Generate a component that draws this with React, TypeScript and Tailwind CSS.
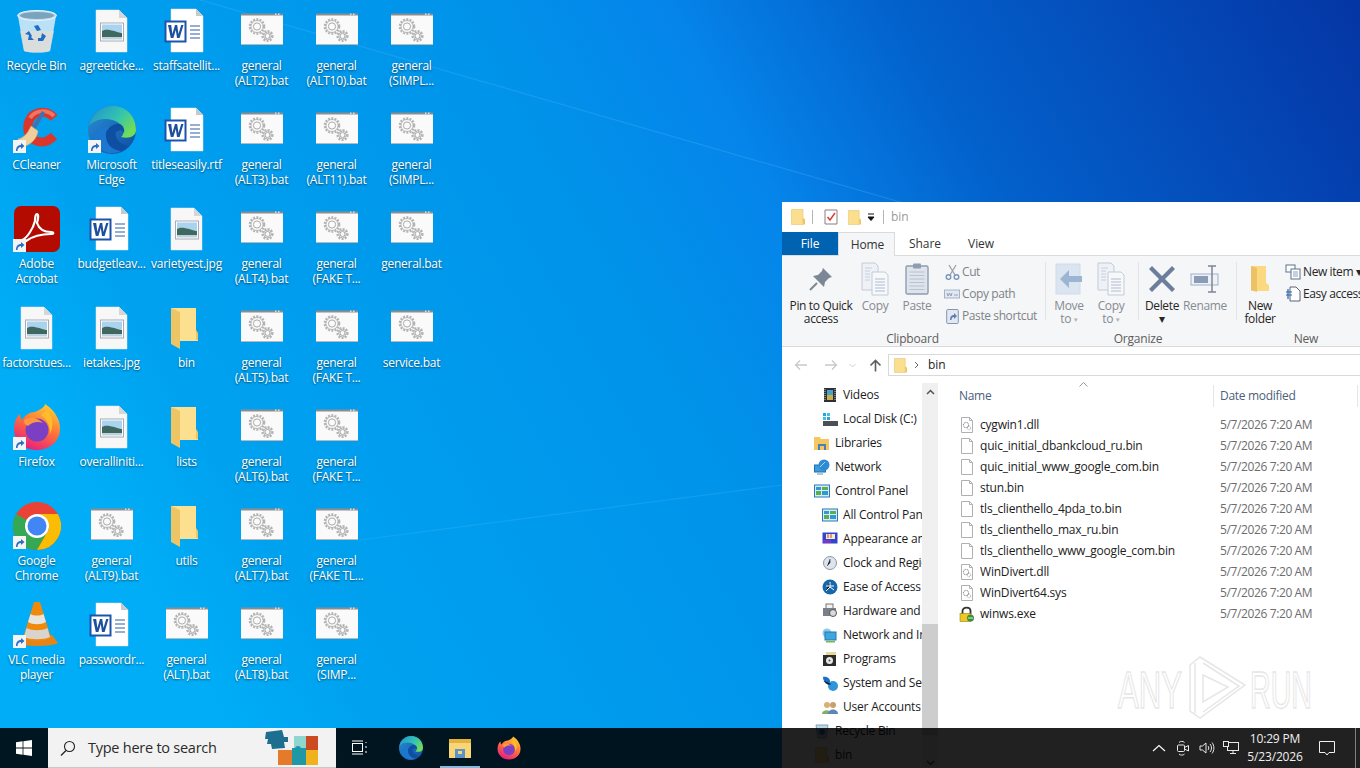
const FONT = "[font-family:'Open_Sans','Noto_Sans',sans-serif]";

function Shortcut() {
  return (
    <span className="absolute bottom-[1px] left-0 flex h-[13px] w-[13px] items-center justify-center bg-[#f4f4f4]">
      <svg width="11" height="11" viewBox="0 0 11 11">
        <path d="M2 10C2 6 4 4 7 4V2l3.5 3L7 8V6C5 6 3.5 7.5 3.5 10Z" fill="#2a6fc4" />
      </svg>
    </span>
  );
}

function Gear({ cx, cy, r }: { cx: number; cy: number; r: number }) {
  return (
    <g fill="none">
      <circle cx={cx} cy={cy} r={r} stroke="#b4b4b4" strokeWidth="2.2" strokeDasharray="2 1.3" />
      <circle cx={cx} cy={cy} r={r - 1.2} stroke="#a2a2a2" strokeWidth="0.7" />
      <circle cx={cx} cy={cy} r={r * 0.5} stroke="#a2a2a2" strokeWidth="0.9" />
    </g>
  );
}

function BatIcon() {
  return (
    <svg width="48" height="48" viewBox="0 0 48 48">
      <rect x="3" y="7" width="42" height="31" fill="#fafafa" />
      <rect x="3" y="6.5" width="42" height="2" fill="#8d8d8d" />
      <rect x="3" y="37" width="42" height="1" fill="#b9b9b9" />
      <rect x="37" y="6.5" width="1.5" height="1.5" fill="#ddd" />
      <rect x="40" y="6.5" width="1.5" height="1.5" fill="#ddd" />
      <Gear cx={19} cy={19.5} r={7.2} />
      <Gear cx={29.5} cy={29} r={5} />
    </svg>
  );
}

function PageShape() {
  return (
    <>
      <path d="M8 3H31L39 11V45H8Z" fill="#f7f7f7" stroke="#e4e4e4" strokeWidth="0.5" />
      <path d="M31 3L39 11H31Z" fill="#d6d6d6" />
    </>
  );
}

function ImageIcon() {
  return (
    <svg width="48" height="48" viewBox="0 0 48 48">
      <PageShape />
      <rect x="12.5" y="16" width="23" height="18" fill="#fff" stroke="#a9a9b8" />
      <rect x="14" y="17.5" width="20" height="8" fill="#a9d3ee" />
      <path d="M14 24C19 21 24 24 34 26V30H14Z" fill="#3f6860" />
      <rect x="14" y="30" width="20" height="2.5" fill="#bcd3de" />
    </svg>
  );
}

function WordIcon() {
  return (
    <svg width="48" height="48" viewBox="0 0 48 48">
      <path d="M8 2H33L40 9V45H8Z" fill="#fff" stroke="#e2e2e2" strokeWidth="0.5" />
      <path d="M33 2L40 9H33Z" fill="#c9c9c9" />
      <path d="M27 19H37M27 23H37M27 27H37M27 31H37" stroke="#2f5ea8" strokeWidth="1" />
      <rect x="2.5" y="14.5" width="20" height="20" fill="#fff" stroke="#1c54ab" strokeWidth="2" />
      <path d="M5 18H8.2L9.4 27L12 18H14.2L15.5 27L18.2 18H20.5L16.6 31H14L12.8 23L10.4 31H7.8Z" fill="#1d4f9f" />
    </svg>
  );
}

function FolderIcon() {
  return (
    <svg width="48" height="48" viewBox="0 0 48 48">
      <path d="M8 4H33V34H35V31H35V36H8Z" fill="#fbdc8a" />
      <path d="M14 4H33V29L35 31V37H14Z" fill="#fde08f" />
      <path d="M8 4L17 8V45L8 40Z" fill="#eec565" />
      <path d="M33 26L35 29V36H33Z" fill="#f0c560" />
    </svg>
  );
}

function RecycleIcon() {
  return (
    <svg width="48" height="48" viewBox="0 0 48 48">
      <path d="M5 9L11 44C17 46 31 46 37 44L43 9Z" fill="#cfe8f6" opacity="0.9" />
      <path d="M7 24L11 44C17 46 31 46 37 44L41 24Z" fill="#e6ddd2" opacity="0.7" />
      <ellipse cx="24" cy="8.5" rx="19.5" ry="5" fill="#bfd8e8" stroke="#eaf5fb" />
      <ellipse cx="24" cy="8.5" rx="17" ry="3.5" fill="#7aa3bd" />
      <path d="M21 19L25 18L28 23L24 24ZM29 26L33 29L30 34H25V31H28ZM21 33H15L16 28L12 27L16 24L19 29L18 30Z" fill="#1f6dc6" />
    </svg>
  );
}

function CCleanerIcon() {
  return (
    <svg width="48" height="48" viewBox="0 0 48 48">
      <path d="M41 12C34 3 20 5 16 15C12 25 18 36 29 36C34 36 38 33 41 30" fill="none" stroke="#d9372c" strokeWidth="9" />
      <path d="M41 10C34 3 22 4 17 12" fill="none" stroke="#ef7462" strokeWidth="4" />
      <path d="M29 5L32 7L22 24L18 22Z" fill="#3b74b5" />
      <path d="M18 20L25 25C24 33 17 40 8 41C5 37 6 36 5 33C11 32 15 27 18 20Z" fill="#f0cf9c" stroke="#d8a96c" strokeWidth="0.6" />
    </svg>
  );
}

function EdgeIcon({ size = 48 }: { size?: number }) {
  return (
    <svg width={size} height={size} viewBox="0 0 48 48">
      <defs>
        <linearGradient id="edgeA" x1="0" y1="0" x2="1" y2="0.6">
          <stop offset="0" stopColor="#1f8fcf" />
          <stop offset="0.6" stopColor="#33c3b0" />
          <stop offset="1" stopColor="#6fdc5a" />
        </linearGradient>
        <linearGradient id="edgeB" x1="0" y1="0" x2="1" y2="1">
          <stop offset="0" stopColor="#2a8fd8" />
          <stop offset="1" stopColor="#0d4d9e" />
        </linearGradient>
      </defs>
      <circle cx="24" cy="24" r="24" fill="url(#edgeB)" />
      <path d="M1 20C4 6 15 0 25 0C38 0 48 10 48 24C48 31 40 33 33 31C37 28 36 21 32 18C24 11 8 11 1 20Z" fill="url(#edgeA)" />
      <path d="M19 36C15 28 20 20 28 18C34 17 37 22 36 27C34 23 31 24 28 26C26 31 31 38 40 40C34 47 25 48 19 36Z" fill="#0e4fa3" />
      <path d="M18 30C18 38 24 44 33 45C23 50 10 46 5 34C8 24 16 20 22 20C18 24 17 27 18 30Z" fill="#1b77cf" />
    </svg>
  );
}

function AcrobatIcon() {
  return (
    <svg width="48" height="48" viewBox="0 0 48 48">
      <rect x="1" y="1" width="46" height="46" rx="7" fill="#b30b00" />
      <path
        d="M9 35C14 33 20 24 22 16C22 11 23 9 24 9C26 9 25 15 24 18C26 24 31 27 38 27C41 27 41 29 38 29C30 29 20 31 13 36C9 39 7 37 9 35Z"
        fill="none"
        stroke="#fff"
        strokeWidth="2.2"
      />
    </svg>
  );
}

function FirefoxIcon({ size = 48 }: { size?: number }) {
  return (
    <svg width={size} height={size} viewBox="0 0 48 48">
      <defs>
        <linearGradient id="ffA" x1="0.7" y1="0" x2="0.2" y2="1">
          <stop offset="0" stopColor="#ffcb2e" />
          <stop offset="0.45" stopColor="#ff7139" />
          <stop offset="1" stopColor="#e31587" />
        </linearGradient>
      </defs>
      <path d="M24 47C10 47 1 37 1 26C1 19 4 13 7 11C7 14 8 16 9 17C12 12 17 9 22 9C28 6 32 4 32 1C38 5 42 9 44 14C47 19 47 24 47 26C47 38 37 47 24 47Z" fill="url(#ffA)" />
      <circle cx="24" cy="27" r="11.5" fill="#7b3fc4" />
      <path d="M11 17C17 13 25 15 30 20C25 18 19 19 15 23C12 22 11 20 11 17Z" fill="#ff9640" />
      <path d="M34 8C40 14 41 22 37 31C37 22 34 16 28 12Z" fill="#ffbd2e" />
    </svg>
  );
}

function ChromeIcon() {
  return (
    <svg width="48" height="48" viewBox="0 0 48 48">
      <circle cx="24" cy="24" r="24" fill="#ea4335" />
      <path d="M24 24L3.2 12A24 24 0 0 0 24 48L36 27Z" fill="#34a853" />
      <path d="M24 12H44.8A24 24 0 0 1 24 48L36 27Z" fill="#fbbc04" />
      <circle cx="24" cy="24" r="12" fill="#fff" />
      <circle cx="24" cy="24" r="9.5" fill="#4285f4" />
    </svg>
  );
}

function VlcIcon() {
  return (
    <svg width="48" height="48" viewBox="0 0 48 48">
      <path d="M4 42L9 34H39L45 42C40 46 9 46 4 42Z" fill="#e78415" />
      <path d="M21 1H27L38 37C32 41 16 41 10 37Z" fill="#f08a0c" />
      <path d="M17.5 13C21 15 27 15 30.5 13L33 21C28 24 20 24 15 21Z" fill="#e8e4de" />
      <path d="M13.5 27C19 30 29 30 34.5 27L37 36C31 39 17 39 11 36Z" fill="#d9d4ce" />
    </svg>
  );
}

type Kind = "bat" | "image" | "word" | "folder" | "recycle" | "ccleaner" | "edge" | "acrobat" | "firefox" | "chrome" | "vlc";

function DesktopGlyph({ kind }: { kind: Kind }) {
  switch (kind) {
    case "bat":
      return <BatIcon />;
    case "image":
      return <ImageIcon />;
    case "word":
      return <WordIcon />;
    case "folder":
      return <FolderIcon />;
    case "recycle":
      return <RecycleIcon />;
    case "ccleaner":
      return <CCleanerIcon />;
    case "edge":
      return <EdgeIcon />;
    case "acrobat":
      return <AcrobatIcon />;
    case "firefox":
      return <FirefoxIcon />;
    case "chrome":
      return <ChromeIcon />;
    case "vlc":
      return <VlcIcon />;
  }
}

const DESKTOP: Array<{ label: string; kind: Kind; link?: boolean }> = [
  { label: "Recycle Bin", kind: "recycle" },
  { label: "CCleaner", kind: "ccleaner", link: true },
  { label: "Adobe\nAcrobat", kind: "acrobat", link: true },
  { label: "factorstues...", kind: "image" },
  { label: "Firefox", kind: "firefox", link: true },
  { label: "Google\nChrome", kind: "chrome", link: true },
  { label: "VLC media\nplayer", kind: "vlc", link: true },

  { label: "agreeticke...", kind: "image" },
  { label: "Microsoft\nEdge", kind: "edge", link: true },
  { label: "budgetleav...", kind: "word" },
  { label: "ietakes.jpg", kind: "image" },
  { label: "overalliniti...", kind: "image" },
  { label: "general\n(ALT9).bat", kind: "bat" },
  { label: "passwordr...", kind: "word" },

  { label: "staffsatellit...", kind: "word" },
  { label: "titleseasily.rtf", kind: "word" },
  { label: "varietyest.jpg", kind: "image" },
  { label: "bin", kind: "folder" },
  { label: "lists", kind: "folder" },
  { label: "utils", kind: "folder" },
  { label: "general\n(ALT).bat", kind: "bat" },

  { label: "general\n(ALT2).bat", kind: "bat" },
  { label: "general\n(ALT3).bat", kind: "bat" },
  { label: "general\n(ALT4).bat", kind: "bat" },
  { label: "general\n(ALT5).bat", kind: "bat" },
  { label: "general\n(ALT6).bat", kind: "bat" },
  { label: "general\n(ALT7).bat", kind: "bat" },
  { label: "general\n(ALT8).bat", kind: "bat" },

  { label: "general\n(ALT10).bat", kind: "bat" },
  { label: "general\n(ALT11).bat", kind: "bat" },
  { label: "general\n(FAKE T...", kind: "bat" },
  { label: "general\n(FAKE T...", kind: "bat" },
  { label: "general\n(FAKE T...", kind: "bat" },
  { label: "general\n(FAKE TL...", kind: "bat" },
  { label: "general\n(SIMP...", kind: "bat" },

  { label: "general\n(SIMPL...", kind: "bat" },
  { label: "general\n(SIMPL...", kind: "bat" },
  { label: "general.bat", kind: "bat" },
  { label: "service.bat", kind: "bat" },
];

function DesktopItem({ label, kind, link }: { label: string; kind: Kind; link?: boolean }) {
  return (
    <div className="flex w-[75px] flex-col items-center pt-[7px]">
      <div className="relative h-12 w-12">
        <DesktopGlyph kind={kind} />
        {link ? <Shortcut /> : null}
      </div>
      <p className="mt-[3px] w-[75px] whitespace-pre-line text-center text-[12px] leading-[15px] tracking-[-0.25px] text-white [text-shadow:0_1px_2px_rgba(0,0,0,0.55)]">
        {label}
      </p>
    </div>
  );
}

function Wallpaper() {
  return (
    <svg className="absolute inset-0" width="1360" height="768" viewBox="0 0 1360 768">
      <path d="M200 0L900 202" stroke="#4fb4ff" strokeWidth="1.2" opacity="0.3" />
      <path d="M360 540L782 485" stroke="#5cc8ff" strokeWidth="1.2" opacity="0.2" />
    </svg>
  );
}

/* ---------- explorer window ---------- */

function SmallFolder({ size = 16 }: { size?: number }) {
  return (
    <svg width={size} height={size} viewBox="0 0 16 16">
      <path d="M1.5 0.5H13V15.5H1.5Z" fill="#fcdf8e" stroke="#e3c374" strokeWidth="0.6" />
      <path d="M13 9L15 10V15.5H13Z" fill="#eec565" />
    </svg>
  );
}

function TitleBar() {
  return (
    <div className="flex h-[30px] items-center bg-white pl-[8px]">
      <SmallFolder />
      <span className="ml-[6px] h-[14px] w-px bg-[#b5b5b5]" />
      <svg className="ml-[11px]" width="14" height="16" viewBox="0 0 14 16">
        <path d="M1 1H13V15H1Z" fill="#fff" stroke="#8c7f7f" />
        <path d="M3.5 8L6 11L11 4" fill="none" stroke="#d83b30" strokeWidth="1.4" />
      </svg>
      <span className="ml-[9px]">
        <SmallFolder size={15} />
      </span>
      <svg className="ml-[4px]" width="10" height="10" viewBox="0 0 10 10">
        <path d="M2 2H8M2 5H8L5 8.5Z" stroke="#111" strokeWidth="1" fill="#111" />
      </svg>
      <span className="ml-[7px] h-[14px] w-px bg-[#b5b5b5]" />
      <span className="ml-[7px] text-[12px] text-[#9b9b9b]">bin</span>
    </div>
  );
}

function Tabs() {
  return (
    <div className="flex h-[24px] items-stretch border-b border-[#dadbdc] bg-white text-[12px] tracking-[-0.1px] text-[#333]">
      <div className="flex w-[56px] items-center justify-center bg-[#0063b1] text-white">File</div>
      <div className="-mb-px flex w-[57px] items-center justify-center border-x border-t border-x-[#dadbdc] border-t-[#dadbdc] bg-[#f5f6f7] pl-[2px]">
        Home
      </div>
      <div className="flex w-[60px] items-center justify-center">Share</div>
      <div className="flex w-[52px] items-center justify-center">View</div>
    </div>
  );
}

function BigButton({
  width,
  label,
  dim,
  caret,
  children,
}: {
  width: string;
  label: string;
  dim?: boolean;
  caret?: boolean;
  children: React.ReactNode;
}) {
  return (
    <div className={`flex shrink-0 flex-col items-center ${width}`}>
      <div className="flex h-[41px] items-center justify-center">{children}</div>
      <p className={`whitespace-pre-line text-center text-[12px] leading-[13px] tracking-[-0.35px] ${dim ? "text-[#858b92]" : "text-[#262626]"}`}>
        {label}
        {caret ? <span className="ml-[3px] align-middle text-[7px] text-[#b0b0b0]">▾</span> : null}
      </p>
    </div>
  );
}

function SmallButton({ label, dim, children }: { label: string; dim?: boolean; children: React.ReactNode }) {
  return (
    <div className="flex h-[22px] items-center gap-[2px] whitespace-nowrap">
      <span className="flex w-[16px] justify-center">{children}</span>
      <span className={`text-[12px] tracking-[-0.4px] ${dim ? "text-[#7d8389]" : "text-[#262626]"}`}>{label}</span>
    </div>
  );
}

function Sep() {
  return <span className="my-[4px] block h-[58px] w-px shrink-0 bg-[#e2e3e4]" />;
}

function CopyGlyph({ size = 30 }: { size?: number }) {
  return (
    <svg width={size} height={size + 4} viewBox="0 0 30 34">
      <path d="M2 1H15L18 4V28H2Z" fill="#eef1f5" stroke="#c3cbd8" />
      <path d="M12 10H25L28 13V33H12Z" fill="#f7f8fa" stroke="#c3cbd8" />
      <path d="M15 17H25M15 20H25M15 23H25M15 26H25M15 29H25" stroke="#aebbd1" />
      <path d="M5 6H12M5 9H10M5 12H10M5 15H10M5 18H10" stroke="#c6d0e0" />
    </svg>
  );
}

function Ribbon() {
  return (
    <div className="flex h-[91px] border-b border-[#dadbdc] bg-[#f5f6f7] pt-[2px]">
      {/* Clipboard */}
      <div className="flex w-[263px] shrink-0 flex-col">
        <div className="flex h-[76px]">
          <BigButton width="w-[78px]" label={"Pin to Quick\naccess"}>
            <svg width="24" height="24" viewBox="0 0 24 24">
              <path d="M14 1L23 10L20 11L16 15L15 20L4 9L9 8L13 4Z" fill="#7b8794" />
              <path d="M8 16L1 23" stroke="#7b8794" strokeWidth="2" />
            </svg>
          </BigButton>
          <BigButton width="w-[30px]" label="Copy" dim>
            <CopyGlyph />
          </BigButton>
          <BigButton width="w-[54px]" label="Paste" dim>
            <svg width="24" height="32" viewBox="0 0 24 32">
              <rect x="1" y="3" width="22" height="28" rx="1.5" fill="#dfe3ea" stroke="#8f9cb2" strokeWidth="1.4" />
              <rect x="8" y="0.5" width="8" height="5" rx="1" fill="#8f9cb2" />
              <path d="M4.5 9H19.5M4.5 12.5H19.5M4.5 16H19.5M4.5 19.5H19.5M4.5 23H19.5M4.5 26.5H19.5" stroke="#b7c2d4" />
            </svg>
          </BigButton>
          <div className="flex w-[100px] flex-col pt-[3px]">
            <SmallButton label="Cut" dim>
              <svg width="15" height="16" viewBox="0 0 15 16">
                <path d="M4 1L10 11M11 1L5 11" stroke="#9aa3ad" strokeWidth="1.3" />
                <circle cx="3.5" cy="13" r="2.3" fill="none" stroke="#7d95bd" strokeWidth="1.4" />
                <circle cx="11.5" cy="13" r="2.3" fill="none" stroke="#7d95bd" strokeWidth="1.4" />
              </svg>
            </SmallButton>
            <SmallButton label="Copy path" dim>
              <svg width="16" height="12" viewBox="0 0 16 12">
                <rect x="0.5" y="2" width="15" height="8" fill="#e3e8f0" stroke="#a5b3c9" />
                <path d="M3 5L4 8L5.5 5L7 8L8 5M10 7H14" stroke="#7d8fae" strokeWidth="0.8" fill="none" />
              </svg>
            </SmallButton>
            <SmallButton label="Paste shortcut" dim>
              <svg width="13" height="16" viewBox="0 0 13 16">
                <rect x="0.7" y="1.5" width="11.6" height="14" rx="1" fill="#e3e8f0" stroke="#8596b2" />
                <path d="M4 12C4 8 6 7 8 7V5L11 8L8 11V9C6.5 9 5.5 10 5.5 12Z" fill="#5d7eb3" />
              </svg>
            </SmallButton>
          </div>
        </div>
        <p className="pr-[2px] text-center text-[12px] leading-[14px] tracking-[-0.2px] text-[#5c5c5c]">Clipboard</p>
      </div>
      <Sep />
      {/* Organize */}
      <div className="flex w-[190px] shrink-0 flex-col">
        <div className="flex h-[76px]">
          <BigButton width="w-[46px]" label={"Move\nto"} dim caret>
            <svg width="28" height="32" viewBox="0 0 28 32">
              <rect x="1" y="1" width="24" height="30" fill="#dbe5f1" stroke="#cfdbe9" />
              <path d="M27 13H14V7L5 16L14 25V19H27Z" fill="#9cb5d3" />
            </svg>
          </BigButton>
          <BigButton width="w-[38px]" label={"Copy\nto"} dim caret>
            <CopyGlyph />
          </BigButton>
          <span className="ml-[8px]">
            <Sep />
          </span>
          <BigButton width="w-[46px]" label={"Delete\n▾"}>
            <svg width="26" height="26" viewBox="0 0 26 26">
              <path d="M3 0L13 10L23 0L26 3L16 13L26 23L23 26L13 16L3 26L0 23L10 13L0 3Z" fill="#6d7e9c" />
            </svg>
          </BigButton>
          <BigButton width="w-[40px]" label="Rename" dim>
            <svg width="30" height="28" viewBox="0 0 30 28">
              <rect x="1" y="9" width="27" height="11" fill="#eef2f7" stroke="#9fb0c8" />
              <rect x="4" y="11" width="14" height="7" fill="#8a9bb6" />
              <path d="M18 1H26M22 1V27M18 27H26" stroke="#7c8695" strokeWidth="1.5" />
            </svg>
          </BigButton>
        </div>
        <p className="pr-[6px] text-center text-[12px] leading-[14px] tracking-[-0.2px] text-[#5c5c5c]">Organize</p>
      </div>
      <Sep />
      {/* New */}
      <div className="flex w-[140px] shrink-0 flex-col">
        <div className="flex h-[76px]">
          <BigButton width="w-[46px]" label={"New\nfolder"}>
            <svg width="22" height="28" viewBox="0 0 22 28">
              <path d="M2 1H17V18L20 20V26H2Z" fill="#fbd980" />
              <path d="M2 1L8 3V27L2 25Z" fill="#edc266" />
            </svg>
          </BigButton>
          <div className="flex flex-col pl-[2px] pt-[3px]">
            <SmallButton label="New item ▾">
              <svg width="16" height="16" viewBox="0 0 16 16">
                <rect x="1" y="1" width="9" height="7" fill="#fff" stroke="#5b7290" />
                <rect x="6" y="5" width="9" height="10" fill="#fff" stroke="#5b7290" />
                <path d="M8 8H13M8 10H13M8 12H13" stroke="#8ea2bd" />
              </svg>
            </SmallButton>
            <SmallButton label="Easy access">
              <svg width="16" height="16" viewBox="0 0 16 16">
                <path d="M5 1H11L15 5V15H5Z" fill="#fff" stroke="#56657a" />
                <path d="M1 6H7M1 9H7M3 3V13" stroke="#2b62ad" strokeWidth="1.2" />
              </svg>
            </SmallButton>
          </div>
        </div>
        <p className="w-[138px] text-center text-[12px] leading-[14px] tracking-[-0.2px] text-[#5c5c5c]">New</p>
      </div>
    </div>
  );
}

function AddressBar() {
  return (
    <div className="flex h-[31px] items-center bg-white pb-[1px] pt-[6px]">
      <div className="flex w-[106px] shrink-0 items-center pl-[12px]">
        <svg width="14" height="12" viewBox="0 0 14 12">
          <path d="M13 6H2M6 1.5L1.5 6L6 10.5" fill="none" stroke="#c9c9c9" strokeWidth="1.3" />
        </svg>
        <svg className="ml-[16px]" width="14" height="12" viewBox="0 0 14 12">
          <path d="M1 6H12M8 1.5L12.5 6L8 10.5" fill="none" stroke="#c9c9c9" strokeWidth="1.3" />
        </svg>
        <svg className="ml-[11px]" width="7" height="5" viewBox="0 0 7 5">
          <path d="M0.5 1L3.5 4L6.5 1" fill="none" stroke="#cfcfcf" />
        </svg>
        <svg className="ml-[13px]" width="13" height="13" viewBox="0 0 13 13">
          <path d="M6.5 12.5V2M1.5 6.5L6.5 1.5L11.5 6.5" fill="none" stroke="#5d5d5d" strokeWidth="1.6" />
        </svg>
      </div>
      <div className="flex h-[22px] flex-1 items-center border border-[#d9d9d9] pl-[4px]">
        <SmallFolder size={15} />
        <svg className="ml-[6px]" width="6" height="8" viewBox="0 0 6 8">
          <path d="M1 1L4 4L1 7" fill="none" stroke="#666" />
        </svg>
        <span className="ml-[8px] text-[12px] text-[#1c1c1c]">bin</span>
      </div>
    </div>
  );
}

function NavGlyph({ kind }: { kind: string }) {
  switch (kind) {
    case "videos":
      return (
        <svg width="16" height="16" viewBox="0 0 16 16">
          <rect x="2" y="1" width="12" height="14" fill="#2d2f38" />
          <rect x="5" y="3" width="6" height="5" fill="#4aa3c6" />
          <rect x="5" y="8" width="6" height="5" fill="#c9b04a" />
          <path d="M3 2V14M13 2V14" stroke="#c9c9c9" strokeDasharray="1 1" />
        </svg>
      );
    case "disk":
      return (
        <svg width="16" height="16" viewBox="0 0 16 16">
          <rect x="1" y="10" width="15" height="5" fill="#4c4f55" />
          <rect x="1" y="2" width="3" height="3" fill="#22a6dc" />
          <rect x="5" y="2" width="3" height="3" fill="#3bc2e8" />
          <rect x="1" y="6" width="3" height="3" fill="#3bc2e8" />
          <rect x="5" y="6" width="3" height="3" fill="#22a6dc" />
        </svg>
      );
    case "libraries":
      return (
        <svg width="16" height="16" viewBox="0 0 16 16">
          <path d="M0 2H6L7 4H15V15H0Z" fill="#f5c763" />
          <rect x="4" y="9" width="8" height="6" fill="#4d7fb5" />
          <rect x="6" y="11" width="4" height="4" fill="#f5c763" />
        </svg>
      );
    case "network":
      return (
        <svg width="16" height="16" viewBox="0 0 16 16">
          <rect x="0.5" y="6" width="11" height="7" fill="#3b9ddc" stroke="#1f6fb0" />
          <circle cx="10" cy="6" r="5.5" fill="#2f8bd3" />
          <path d="M6 8L11 3" stroke="#a9d8f5" />
          <path d="M3 15H9" stroke="#6f8aa3" />
        </svg>
      );
    case "panel":
      return (
        <svg width="16" height="16" viewBox="0 0 16 16">
          <rect x="0.5" y="2" width="15" height="12" fill="#d7ebf8" stroke="#2a79bb" />
          <rect x="2" y="4" width="5" height="3" fill="#2e9ad0" />
          <rect x="8" y="4" width="6" height="3" fill="#59b04b" />
          <rect x="2" y="8" width="5" height="4" fill="#59b04b" />
          <rect x="8" y="8" width="6" height="4" fill="#2e9ad0" />
        </svg>
      );
    case "appearance":
      return (
        <svg width="16" height="16" viewBox="0 0 16 16">
          <rect x="0.5" y="1.5" width="15" height="11" fill="#3345c8" />
          <rect x="4" y="3" width="9" height="5" fill="#f5ebd0" />
          <path d="M5 4H7M8 4H10M5 6H7M8 6H10" stroke="#c24a3b" />
          <rect x="1" y="9" width="8" height="3" fill="#7d37c8" />
        </svg>
      );
    case "clock":
      return (
        <svg width="16" height="16" viewBox="0 0 16 16">
          <circle cx="8" cy="8" r="6.5" fill="#dfe4ea" stroke="#8a97a8" />
          <path d="M8 4V8L5 11" stroke="#5a6878" />
        </svg>
      );
    case "ease":
      return (
        <svg width="16" height="16" viewBox="0 0 16 16">
          <circle cx="8" cy="8" r="7.5" fill="#1767ad" />
          <path d="M8 3V8L4 12M8 8L12 11M4 7H12" stroke="#fff" />
        </svg>
      );
    case "hardware":
      return (
        <svg width="16" height="16" viewBox="0 0 16 16">
          <rect x="4" y="1" width="7" height="5" fill="#f1f1f1" stroke="#777" />
          <rect x="1" y="5" width="13" height="8" fill="#7b7f87" />
          <circle cx="11" cy="10" r="3.5" fill="#d9d9d9" stroke="#555" />
        </svg>
      );
    case "netint":
      return (
        <svg width="16" height="16" viewBox="0 0 16 16">
          <circle cx="5" cy="6" r="4.5" fill="#8cc9ea" />
          <rect x="3" y="5" width="11" height="8" fill="#3fa5dc" stroke="#2179b0" />
          <rect x="4" y="14" width="9" height="1.5" fill="#76b84e" />
        </svg>
      );
    case "programs":
      return (
        <svg width="16" height="16" viewBox="0 0 16 16">
          <rect x="4" y="1" width="10" height="4" fill="#e9d89b" />
          <rect x="1" y="4" width="13" height="11" fill="#2c2c2c" />
          <circle cx="7.5" cy="9.5" r="3.5" fill="#e8e8e8" />
          <circle cx="7.5" cy="9.5" r="1" fill="#555" />
        </svg>
      );
    case "system":
      return (
        <svg width="16" height="16" viewBox="0 0 16 16">
          <path d="M1 2C5 1 9 4 8 8C5 9 1 7 1 2Z" fill="#1b6fc2" />
          <circle cx="11" cy="11" r="5" fill="#2f95d8" />
          <path d="M2 6C4 9 7 10 9 9" stroke="#114f8f" />
        </svg>
      );
    case "users":
      return (
        <svg width="16" height="16" viewBox="0 0 16 16">
          <circle cx="5" cy="6" r="3" fill="#d8b073" />
          <path d="M0 15C0 10 9 10 9 15Z" fill="#7fb25f" />
          <circle cx="11" cy="6" r="3" fill="#caa06a" />
          <path d="M6 15C6 9 16 9 16 15Z" fill="#5b86b8" />
        </svg>
      );
    case "bin":
      return (
        <svg width="16" height="16" viewBox="0 0 16 16">
          <path d="M2 2H14L12 15H4Z" fill="#bcd7e8" stroke="#7ea2bc" />
          <circle cx="8" cy="9" r="3" fill="#2f78c4" />
        </svg>
      );
    default:
      return <SmallFolder />;
  }
}

const NAV = [
  { label: "Videos", icon: "videos", sub: true },
  { label: "Local Disk (C:)", icon: "disk", sub: true },
  { label: "Libraries", icon: "libraries" },
  { label: "Network", icon: "network" },
  { label: "Control Panel", icon: "panel" },
  { label: "All Control Panel Items", icon: "panel", sub: true },
  { label: "Appearance and Personalization", icon: "appearance", sub: true },
  { label: "Clock and Region", icon: "clock", sub: true },
  { label: "Ease of Access", icon: "ease", sub: true },
  { label: "Hardware and Sound", icon: "hardware", sub: true },
  { label: "Network and Internet", icon: "netint", sub: true },
  { label: "Programs", icon: "programs", sub: true },
  { label: "System and Security", icon: "system", sub: true },
  { label: "User Accounts", icon: "users", sub: true },
  { label: "Recycle Bin", icon: "bin" },
  { label: "bin", icon: "folder" },
];

function NavPane() {
  return (
    <div className="flex w-[156px] shrink-0">
      <div className="w-[140px] shrink-0 overflow-hidden pt-[5px]">
        {NAV.map((n) => (
          <div key={n.label} className={`flex h-[24px] items-center whitespace-nowrap ${n.sub ? "pl-[40px]" : "pl-[32px]"}`}>
            <span className="flex w-[16px] shrink-0 justify-center">
              <NavGlyph kind={n.icon} />
            </span>
            <span className="ml-[5px] text-[12px] tracking-[-0.2px] text-[#1c1c1c]">{n.label}</span>
          </div>
        ))}
      </div>
      <div className="mt-[5px] flex w-[16px] shrink-0 flex-col items-center bg-[#f0f0f0] pt-[5px]">
        <svg width="9" height="6" viewBox="0 0 9 6" className="mt-[1px]">
          <path d="M1 5L4.5 1.5L8 5" fill="none" stroke="#555" strokeWidth="1.5" />
        </svg>
        <span className="mt-[229px] h-[111px] w-full bg-[#cdcdcd]" />
        <svg width="9" height="6" viewBox="0 0 9 6" className="mt-[25px]">
          <path d="M1 1L4.5 4.5L8 1" fill="none" stroke="#555" strokeWidth="1.5" />
        </svg>
      </div>
    </div>
  );
}

function FileGlyph({ kind }: { kind: string }) {
  if (kind === "exe") {
    return (
      <svg width="16" height="16" viewBox="0 0 16 16">
        <path d="M3.5 8V5C3.5 0.5 11.5 0.5 11.5 5V8" fill="none" stroke="#333" strokeWidth="1.8" />
        <rect x="1" y="7.5" width="11" height="8" fill="#eec81f" stroke="#8a6d10" strokeWidth="0.5" />
        <circle cx="11.5" cy="12" r="3.5" fill="#3f8f3a" />
        <path d="M9 12L14 12" stroke="#d9ecf7" />
      </svg>
    );
  }
  return (
    <svg width="16" height="16" viewBox="0 0 16 16">
      <path d="M2.5 0.5H10.5L13.5 3.5V15.5H2.5Z" fill="#fff" stroke="#b0b0b0" />
      <path d="M10.5 0.5V3.5H13.5" fill="none" stroke="#b0b0b0" />
      {kind === "sys" ? (
        <g fill="none" stroke="#8f959d">
          <circle cx="7" cy="8" r="2.6" strokeWidth="1.1" strokeDasharray="1 0.6" />
          <circle cx="10" cy="11" r="1.7" strokeWidth="0.9" strokeDasharray="1 0.6" />
        </g>
      ) : null}
    </svg>
  );
}

const FILES = [
  { name: "cygwin1.dll", kind: "sys" },
  { name: "quic_initial_dbankcloud_ru.bin", kind: "bin" },
  { name: "quic_initial_www_google_com.bin", kind: "bin" },
  { name: "stun.bin", kind: "bin" },
  { name: "tls_clienthello_4pda_to.bin", kind: "bin" },
  { name: "tls_clienthello_max_ru.bin", kind: "bin" },
  { name: "tls_clienthello_www_google_com.bin", kind: "bin" },
  { name: "WinDivert.dll", kind: "sys" },
  { name: "WinDivert64.sys", kind: "sys" },
  { name: "winws.exe", kind: "exe" },
];

function FilePane() {
  return (
    <div className="relative flex-1 bg-white">
      <div className="relative ml-[21px] flex h-[29px] pt-[7px] text-[12px] tracking-[-0.3px] text-[#4c607a]">
        <span className="w-[254px] leading-[22px]">Name</span>
        <span className="h-[22px] w-px bg-[#e5e5e5]" />
        <span className="w-[143px] pl-[6px] leading-[22px]">Date modified</span>
        <span className="h-[22px] w-px bg-[#e5e5e5]" />
        <svg className="absolute left-[120px] top-[4px]" width="9" height="5" viewBox="0 0 9 5">
          <path d="M0.5 4.5L4.5 0.5L8.5 4.5" fill="none" stroke="#9a9a9a" />
        </svg>
      </div>
      <div className="pt-[7px]">
        {FILES.map((f) => (
          <div key={f.name} className="flex h-[21px] items-center pl-[21px] text-[12px] tracking-[-0.2px]">
            <FileGlyph kind={f.kind} />
            <span className="ml-[5px] w-[235px] text-[#1c1c1c]">{f.name}</span>
            <span className="ml-[5px] tracking-[-0.38px] text-[#6d6d6d]">5/7/2026 7:20 AM</span>
          </div>
        ))}
      </div>
      {/* watermark */}
      <svg className="absolute left-[177px] top-[277px]" width="204" height="66" viewBox="0 0 204 66">
        <g fill="none" stroke="#e6e6e6" strokeWidth="1.5">
          <text x="3" y="53" fontFamily="'Liberation Sans', sans-serif" fontSize="52" textLength="64" lengthAdjust="spacingAndGlyphs">ANY</text>
          <text x="135" y="53" fontFamily="'Liberation Sans', sans-serif" fontSize="52" textLength="62" lengthAdjust="spacingAndGlyphs">RUN</text>
          <path d="M85 2L130 30L85 63L75 56V10Z" />
          <path d="M88 20L113 32L88 47Z" />
          <path d="M80 8V58M88 8L124 31L88 57" />
        </g>
      </svg>
    </div>
  );
}

function ExplorerWindow() {
  return (
    <div className="absolute left-[782px] top-[202px] h-[566px] w-[720px] overflow-hidden bg-white">
      <TitleBar />
      <Tabs />
      <Ribbon />
      <AddressBar />
      <div className="flex">
        <NavPane />
        <FilePane />
      </div>
    </div>
  );
}

/* ---------- taskbar ---------- */

function Puzzle() {
  return (
    <svg width="56" height="36" viewBox="0 0 56 36">
      <path d="M2 2L18 0L20 7H24V12H20L21 18L8 19L7 14H3L4 9H1Z" fill="#1d6e8f" />
      <rect x="14" y="20" width="14" height="15" fill="#e57b2a" />
      <rect x="28" y="18" width="14" height="17" fill="#1f97a6" />
      <rect x="42" y="20" width="12" height="15" fill="#efb11c" />
      <rect x="30" y="6" width="12" height="12" fill="#8fd6cf" />
      <rect x="42" y="6" width="12" height="14" fill="#cc4a22" />
      <circle cx="34" cy="19" r="3" fill="#1f97a6" />
    </svg>
  );
}

function Taskbar() {
  return (
    <div className="relative z-10 flex h-[40px] items-stretch bg-black/[.87] text-white">
      <div className="flex w-[48px] items-center justify-center">
        <svg width="16" height="16" viewBox="0 0 16 16" fill="#fff">
          <path d="M0 2.2L6.6 1.3V7.6H0ZM7.4 1.2L16 0V7.6H7.4ZM0 8.4H6.6V14.7L0 13.8ZM7.4 8.4H16V16L7.4 14.8Z" />
        </svg>
      </div>
      <div className="flex w-[288px] items-center border-b border-[#c8c8c8] bg-[#f2f2f2] pl-[12px]">
        <svg width="16" height="16" viewBox="0 0 16 16">
          <circle cx="9.5" cy="6.5" r="5" fill="none" stroke="#222" strokeWidth="1.1" />
          <path d="M6 10.5L1 15.5" stroke="#222" strokeWidth="1.3" />
        </svg>
        <span className="ml-[12px] text-[14.5px] tracking-[-0.25px] text-[#2b2b2b]">Type here to search</span>
        <span className="ml-auto mr-[16px] flex">
          <Puzzle />
        </span>
      </div>
      <div className="flex w-[48px] items-center justify-center">
        <svg width="16" height="16" viewBox="0 0 16 16" fill="none" stroke="#fff" strokeWidth="1">
          <rect x="0.5" y="3.5" width="10" height="8" />
          <path d="M0 1H11M0 14H11M14 2V3M14 6V8M14 11V13" />
        </svg>
      </div>
      <div className="ml-[2px] flex w-[50px] items-center justify-center">
        <EdgeIcon size={24} />
      </div>
      <div className="relative flex w-[48px] items-center justify-center">
        <svg width="24" height="24" viewBox="0 0 24 24">
          <path d="M1 3H23V22H1Z" fill="#f9d576" />
          <rect x="1" y="3" width="22" height="4" fill="#e3b23c" />
          <rect x="7" y="13" width="10" height="9" fill="#5a93c9" />
          <rect x="10" y="15" width="4" height="3" fill="#f9d576" />
        </svg>
        <span className="absolute inset-x-[4px] bottom-0 h-[2px] bg-[#86b8dc]" />
      </div>
      <div className="flex w-[50px] items-center justify-center">
        <FirefoxIcon size={24} />
      </div>
      <div className="ml-auto flex items-stretch">
        <div className="flex w-[24px] items-center justify-center">
          <svg width="14" height="8" viewBox="0 0 14 8">
            <path d="M1 7L7 1.5L13 7" fill="none" stroke="#fff" strokeWidth="1.1" />
          </svg>
        </div>
        <div className="flex w-[24px] items-center justify-center">
          <svg width="14" height="16" viewBox="0 0 14 16" fill="none" stroke="#e8e8e8">
            <rect x="1.5" y="5" width="7" height="6.5" rx="1" />
            <path d="M8.5 7.5L12.5 5.5V11L8.5 9M3 2.5C4.5 1 7 1 8.5 2.5M3 14C4.5 15.5 7 15.5 8.5 14" />
          </svg>
        </div>
        <div className="flex w-[24px] items-center justify-center">
          <svg width="16" height="14" viewBox="0 0 16 14" fill="none" stroke="#e8e8e8">
            <path d="M1 5H3.5L7 2V12L3.5 9H1Z" />
            <path d="M9 5C10 6 10 8 9 9M11 3C13 5 13 9 11 11M13 1.5C15.5 4.5 15.5 9.5 13 12.5" />
          </svg>
        </div>
        <div className="flex w-[24px] items-center justify-center">
          <svg width="16" height="14" viewBox="0 0 16 14" fill="none" stroke="#e8e8e8">
            <rect x="4.5" y="1.5" width="11" height="8" />
            <rect x="0.5" y="0.5" width="5" height="5" fill="#222" />
            <path d="M10 9.5V12.5M7 12.5H13" />
          </svg>
        </div>
        <div className="flex w-[60px] flex-col items-center justify-center pl-[4px] text-[12px] leading-[18px] tracking-[-0.15px] text-[#f0f0f0]">
          <span>10:29 PM</span>
          <span>5/23/2026</span>
        </div>
        <div className="mr-[4px] flex w-[48px] items-center justify-center">
          <svg width="16" height="16" viewBox="0 0 16 16" fill="none" stroke="#f0f0f0">
            <path d="M0.5 1.5H15.5V12.5H10L8 15L6 12.5H0.5Z" />
          </svg>
        </div>
        <div className="w-[5px] border-l border-[#7f7f7f]" />
      </div>
    </div>
  );
}

export default function App() {
  return (
    <div className={`relative flex h-[768px] w-[1360px] flex-col overflow-hidden bg-[linear-gradient(240.5deg,#0535a5_0%,#0361cc_26%,#0585ea_39%,#0094ea_51%,#00a2f0_78%,#00adf6_86%)] ${FONT}`}>
      <Wallpaper />
      <div className="relative -ml-px grid h-[728px] auto-cols-[75px] grid-flow-col grid-rows-[repeat(7,99px)] content-start justify-start">
        {DESKTOP.map((d, i) => (
          <DesktopItem key={i} {...d} />
        ))}
      </div>
      <ExplorerWindow />
      <Taskbar />
    </div>
  );
}
